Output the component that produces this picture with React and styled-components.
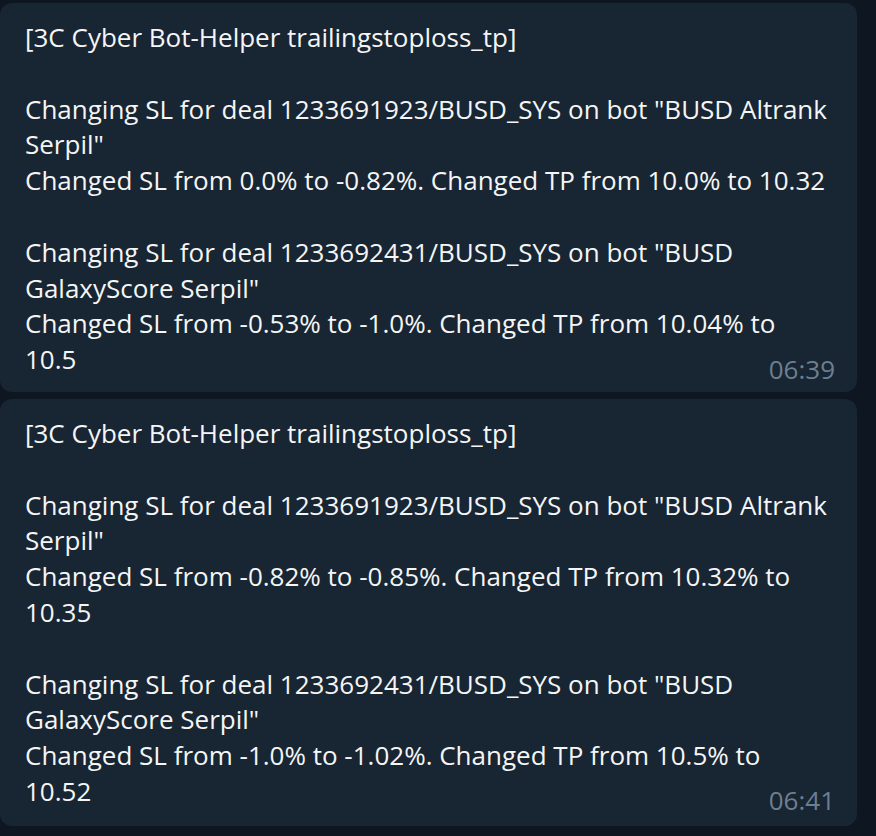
import React from "react";
import styled, { createGlobalStyle } from "styled-components";

const GlobalStyle = createGlobalStyle`
  html, body {
    margin: 0;
    padding: 0;
    background: #0e1621;
  }
`;

const Feed = styled.div`
  display: flex;
  flex-direction: column;
  gap: 7px;
  padding-top: 3px;
  width: 857px;
`;

const Bubble = styled.div`
  display: flow-root;
  background: #182533;
  border-radius: 12px;
  padding: 17px 27px ${(p) => p.$bottom}px 25px;
  font-family: "Open Sans", "Noto Sans", sans-serif;
  font-size: 26px;
  line-height: 35.8px;
  color: #f5f5f5;
  white-space: pre-wrap;
`;

// timestamp sits at the end of the last line, nudged a bit below it
const Time = styled.span`
  float: right;
  margin: ${(p) => p.$drop}px -5px ${(p) => -p.$drop}px 14px;
  font-size: 26px;
  color: #6d7f8f;
  white-space: nowrap;
`;

const messages = [
  {
    time: "06:39",
    bottom: 14,
    drop: 10,
    text: `[3C Cyber Bot-Helper trailingstoploss_tp]

Changing SL for deal 1233691923/BUSD_SYS on bot "BUSD Altrank Serpil"
Changed SL from 0.0% to -0.82%. Changed TP from 10.0% to 10.32

Changing SL for deal 1233692431/BUSD_SYS on bot "BUSD GalaxyScore Serpil"
Changed SL from -0.53% to -1.0%. Changed TP from 10.04% to 10.5`,
  },
  {
    time: "06:41",
    bottom: 16,
    drop: 9,
    text: `[3C Cyber Bot-Helper trailingstoploss_tp]

Changing SL for deal 1233691923/BUSD_SYS on bot "BUSD Altrank Serpil"
Changed SL from -0.82% to -0.85%. Changed TP from 10.32% to 10.35

Changing SL for deal 1233692431/BUSD_SYS on bot "BUSD GalaxyScore Serpil"
Changed SL from -1.0% to -1.02%. Changed TP from 10.5% to 10.52`,
  },
];

const App = () => (
  <>
    <GlobalStyle />
    <Feed>
      {messages.map((m) => (
        <Bubble key={m.time} $bottom={m.bottom}>
          {m.text}
          <Time $drop={m.drop}>{m.time}</Time>
        </Bubble>
      ))}
    </Feed>
  </>
);

export default App;
